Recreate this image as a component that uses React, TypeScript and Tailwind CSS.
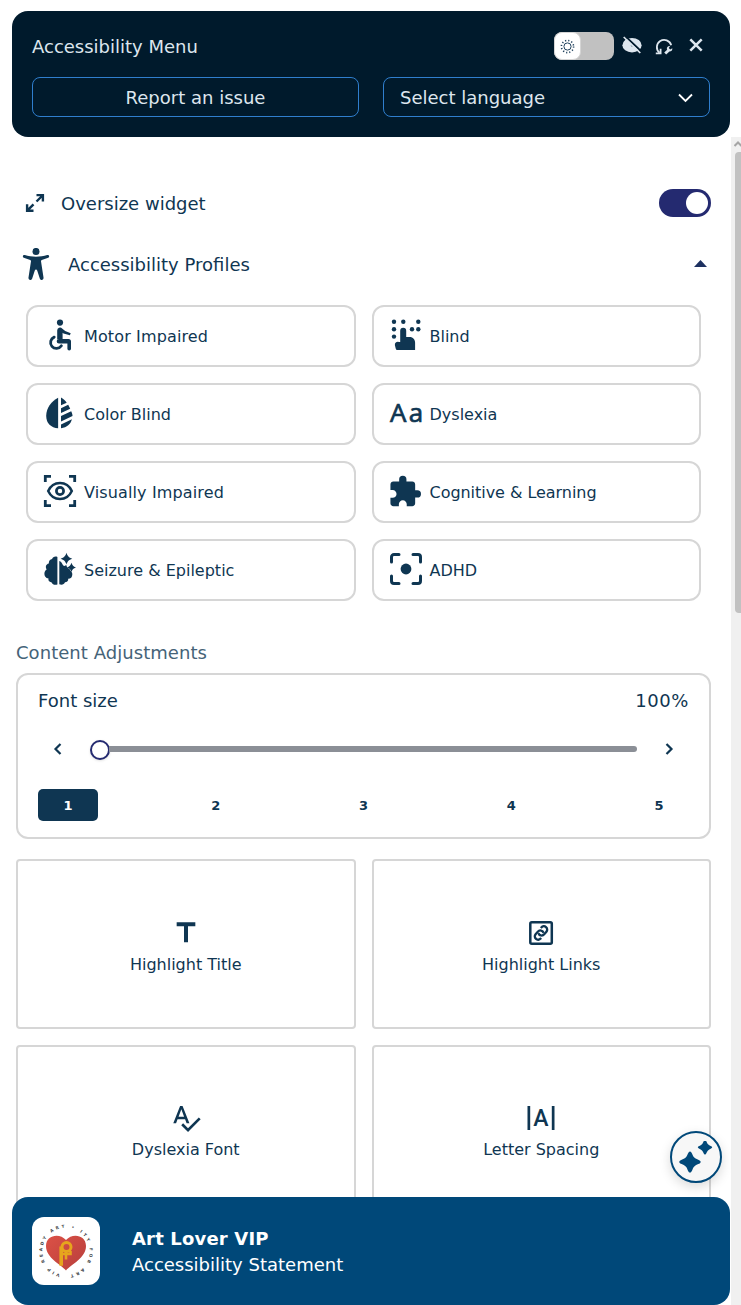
import React from "react";
import { MdTitle, MdSpellcheck, MdExtension } from "react-icons/md";

const ic = "h-8 w-8 shrink-0 mb-0.5 overflow-visible";

const EyeOff = () => (
  <svg className="h-5 w-5" viewBox="0 0 20 20">
    <ellipse cx="10" cy="9.2" rx="9.6" ry="7.3" fill="#dde6ee" />
    <circle cx="10.2" cy="9.6" r="1.4" fill="#8999a8" />
    <path d="M2.9 -.2L20 16" stroke="#001a2c" strokeWidth="1.800" />
    <path d="M1.700 1L18.300 17" stroke="#dde6ee" strokeWidth="1.700" />
  </svg>
);

const Reset = () => (
  <svg className="h-5 w-5" viewBox="0 0 20 20" fill="none" stroke="#dde6ee" strokeWidth="1.800">
    <path d="M5.500 16.800A7.300 7.300 0 1 1 17.200 9.200" />
    <path d="M1.800 17.400h4.800v-4.600" />
    <path d="M11.200 17.600l3.200-3.200" strokeWidth="2.800" />
    <path d="M12.900 13.400c-.3-2 1-3.600 3.200-3.300l-1.300 1.800 1.400 1.500 2.100-1.200c.3 2.500-1.700 3.800-3.800 3.200z" fill="#dde6ee" stroke="none" />
  </svg>
);

const Sun = () => (
  <svg className="h-[15px] w-[15px]" viewBox="0 0 15 15" fill="none" stroke="#21425d" strokeWidth="1">
    <circle cx="7.500" cy="7.500" r="3.600" />
    <circle cx="7.500" cy="7.500" r="6.100" strokeWidth="1.600" strokeDasharray="1.200 1.990" />
  </svg>
);

const Motor = () => (
  <svg className={ic} viewBox="0 0 32 32" fill="none" stroke="#0f3652" strokeWidth="2.800" strokeLinecap="round" strokeLinejoin="round">
    <circle cx="16" cy="3.600" r="3.100" fill="#0f3652" stroke="none" />
    <path d="M13.200 11.400a2.900 2.900 0 0 1 4.900-2l3.100 2.700 5.500 2.100-.8 2.100-6.400-1.900-.9-.6v6.500h-5.400z" fill="#0f3652" stroke="none" />
    <path d="M15 20h9.500a2.500 2.500 0 0 1 2.500 2.500v7.200a1.800 1.800 0 0 1-3.600 0v-5.100H15a2.300 2.300 0 0 1 0-4.600z" fill="#0f3652" stroke="none" />
    <path d="M10.200 18.100a5.900 5.900 0 1 0 7.200 8.700" />
  </svg>
);

const Blind = () => (
  <svg className={ic} viewBox="0 0 32 32" fill="#0f3652">
    <circle cx="4" cy="2.700" r="2.200" /><circle cx="13.300" cy="2.700" r="2.200" /><circle cx="28.300" cy="2.700" r="2.200" />
    <circle cx="4" cy="10.300" r="2.200" /><circle cx="22" cy="10.300" r="2.200" /><circle cx="28.300" cy="10.300" r="2.200" />
    <circle cx="4" cy="17.600" r="2.200" />
    <path d="M10.200 11.700a3 3 0 0 1 6 0v6.400h3.500c3.300 0 5.400 2.600 5.400 5.700V31H7.400a1.700 1.700 0 0 1-1.700-1.500l-.8-3.200c-.4-2.400 1.500-3.800 3.800-3.400l1.500.2z" />
  </svg>
);

const ColorBlind = () => (
  <svg className={ic} viewBox="0 0 32 32" fill="#0f3652">
    <path d="M14.100.8v30.500C7.100 30.800 2.200 26.200 2.200 19 2.200 11.400 7.300 4.100 14.100.8z" />
    <path d="M17 .6c2.800 1.600 4.400 3.300 5.700 5.100L17 8.300zM17 11.300l7.200-3.600 2 4L17 16zM17 19.100l10.200-4.800c1 2.200 1.400 3.700 1.300 4.800L17 24.500zM17 27.500l10.900-5.200c-1.300 5-4.800 8-10.900 9z" />
  </svg>
);

const Dyslexia = () => (
  <span className="mb-0.5 flex h-8 w-8 shrink-0 items-center justify-between font-['Open_Sans',sans-serif] text-[26px] leading-8 font-medium">
    <svg className="h-10 w-8 shrink-0 overflow-visible" viewBox="0 -4 32 40" fill="#0f3652" stroke="#0f3652" strokeWidth=".700">
      <text x="-.1" y="25" textLength="16.400" lengthAdjust="spacingAndGlyphs">A</text>
      <text x="18.800" y="25" textLength="14.400" lengthAdjust="spacingAndGlyphs">a</text>
    </svg>
  </span>
);

const Vision = () => (
  <svg className={ic} viewBox="0 0 32 32" fill="none" stroke="#0f3652" strokeWidth="2.800">
    <path d="M1.300 7V1.300H7M25 1.300h5.700V7M1.300 25v5.700H7M25 30.700h5.700V25" />
    <path d="M4.200 16C6.500 11 11 8 16 8s9.500 3 11.800 8C25.500 21 21 24 16 24S6.500 21 4.200 16z" strokeWidth="2.500" />
    <circle cx="16" cy="16" r="3.600" strokeWidth="2.700" />
  </svg>
);

const Brain = () => (
  <svg className={ic} viewBox="0 0 32 32" fill="#0f3652">
    <path d="M13.400 31.400c-1.900.9-5 .5-5.700-2C4.900 29.200 4 27.300 4.500 25.600 1.700 25.200.2 23.100.4 20.500.5 18.400 1.600 17.100 2.700 16.500 1.100 14 1.900 11.200 4.800 10.500 4.700 7.900 6.200 6.300 8.100 6.100 8.500 3.900 11.400 2.700 13.400 3.900z" />
    <path d="M15.300 8c1.700.4 2.500 1.700 3.200 3.300.7 2 2.800 2 3.700.8.6 2 1.200 3 2.800 3.600.8.3 1 1.400 2 2.600.8 1.100 1.300 1.300 1.300 3.100 0 2.700-1.600 4.300-4.100 4.400.3 2-1.200 3.500-3.200 3.500-.8 2.400-3.400 2.900-5.700 2z" />
    <path d="M22.500-.2c1.100 3.400 2.200 4.700 5.800 5.900-3.600 1.200-4.700 2.400-5.800 5.800-1.200-3.400-2.300-4.600-5.900-5.800 3.600-1.200 4.700-2.500 5.900-5.900zM27.500 9.800c.9 2.800 1.800 3.800 4.500 4.700-2.700.9-3.600 1.900-4.500 4.600-1-2.700-1.900-3.700-4.600-4.600 2.700-.9 3.600-1.900 4.600-4.700z" />
  </svg>
);

const Puzzle = () => <MdExtension className={ic} viewBox="1.7 .5 22 22" color="#0f3652" />;

const Focus = () => (
  <svg className={ic} viewBox="0 0 32 32" fill="none" stroke="#0f3652" strokeWidth="3" strokeLinecap="round">
    <path d="M1.500 9V4a2.500 2.500 0 0 1 2.500-2.500H9M23 1.500h5A2.500 2.500 0 0 1 30.500 4v5M1.500 23v5A2.500 2.500 0 0 0 4 30.500h5M23 30.500h5a2.500 2.500 0 0 0 2.500-2.500v-5" />
    <circle cx="16" cy="16" r="5.400" fill="#0f3652" stroke="none" />
  </svg>
);

const LinkBox = () => (
  <svg className="h-8 w-8" viewBox="0 0 32 32" fill="none" stroke="#0f3652" strokeWidth="2.500">
    <rect x="5.300" y="5.300" width="21.500" height="21.500" rx="1.500" />
    <g transform="rotate(-50 16 16)" strokeWidth="2.300">
      <path d="M12.300 19.300h-.8a3.300 3.300 0 0 1 0-6.600h3.500a3.300 3.300 0 0 1 2.700 5.200" />
      <path d="M19.700 12.700h.8a3.300 3.300 0 0 1 0 6.600H17a3.300 3.300 0 0 1-2.700-5.200" />
    </g>
  </svg>
);

const Spacing = () => (
  <svg className="h-8 w-8" viewBox="0 0 32 32" fill="#0f3652">
    <rect x="2.500" y="4" width="2.700" height="24" />
    <rect x="26.800" y="4" width="2.700" height="24" />
    <text x="16" y="24" textAnchor="middle" fontFamily="Roboto" fontWeight="500" fontSize="23">A</text>
  </svg>
);

const Sparkles = () => (
  <svg className="h-8 w-[34px] shrink-0" viewBox="0 0 34 32" fill="#004879">
    <path d="M11 10.500c2 0 2.200 4 4.300 6.100S21.700 19.200 21.700 21s-4.300 2.300-6.400 4.400-2.300 6.200-4.300 6.200-2.200-4.100-4.300-6.200S.3 22.900.3 21s4.300-2.300 6.400-4.400 2.300-6.100 4.300-6.100z" />
    <path d="M26-1c1.400 0 1.500 2.700 3 4.200s4.200 1.800 4.200 3.100S30.500 7.900 29 9.400s-1.600 4.100-3 4.100-1.500-2.600-3-4.100-4.200-1.800-4.200-3.100 2.700-1.600 4.200-3.100S24.600-1 26-1z" />
  </svg>
);

const Logo = () => (
  <svg className="h-[68px] w-[68px]" viewBox="0 0 68 68">
    <defs>
      <linearGradient id="heart" x1="0" x2="1" y1="0" y2="1">
        <stop offset="0" stopColor="#dc5146" />
        <stop offset="1" stopColor="#b73f3c" />
      </linearGradient>
      <path id="ring" d="M34 58a23.700 23.700 0 1 1 .1 0" />
    </defs>
    <text fontFamily="DejaVu Sans" fontWeight="700" fontSize="4.200" fill="#3c4246">
      <textPath href="#ring" startOffset="6" textLength="138">VIP  READY ART • ITY FOR  ART</textPath>
    </text>
    <path d="M34 53.500C29 47.500 14 41 14 29 14 18 27.500 15.500 34 23c6.500-7.500 20-5 20 6 0 12-15 18.500-20 24.500z" fill="url(#heart)" />
    <g fill="none" stroke="#e6a51d">
      <circle cx="34.500" cy="30" r="4.500" strokeWidth="3" />
      <path d="M29.200 29.500v19.300" strokeWidth="3.600" />
      <path d="M34 34v8.500M31 37h7.500v-3" strokeWidth="2.600" />
    </g>
  </svg>
);

function Profile({ icon, label, track }: { icon: React.ReactNode; label: string; track: string }) {
  return (
    <div className="flex h-[62px] items-center gap-2 rounded-xl border-2 border-[#d6d6d6] pl-4">
      {icon}
      <span className={`pt-0.5 text-base leading-5 whitespace-nowrap ${track}`}>{label}</span>
    </div>
  );
}

function Tile({ icon, label }: { icon: React.ReactNode; label: string }) {
  return (
    <div className="flex h-[170px] flex-col items-center rounded-[4px] border-2 border-[#d6d6d6] pt-14">
      {icon}
      <span className="mt-[6px] text-base leading-5">{label}</span>
    </div>
  );
}

export default function App() {
  return (
    <div className="relative flex h-[1305px] w-full flex-col overflow-hidden bg-white font-['DejaVu_Sans',sans-serif] text-[#0f3652]">
      <header className="mx-3 mt-[11px] h-[126px] w-[718px] shrink-0 rounded-2xl bg-[#001a2c] px-5 pt-[21px] text-[#dde6ee]">
        <div className="flex h-7 items-center">
          <h1 className="flex-1 pt-0.5 text-lg leading-7">Accessibility Menu</h1>
          <div className="flex h-7 w-[60px] items-center rounded-lg bg-[#c1c1c1]">
            <span className="flex h-7 w-[27px] items-center justify-center rounded-lg border border-[#d5d5d5] bg-white"><Sun /></span>
          </div>
          <div className="ml-2 flex items-center gap-3">
            <EyeOff />
            <Reset />
            <svg className="h-5 w-5" viewBox="0 0 20 20" stroke="#dde6ee" strokeWidth="2.500"><path d="M4.300 3.300l11.400 11.400M15.700 3.300L4.300 14.700" /></svg>
          </div>
          <span className="w-1" />
        </div>
        <div className="mt-[17px] grid grid-cols-2 gap-6 text-lg">
          <button className="h-10 rounded-lg border border-[#2f7ecd] pt-0.5">Report an issue</button>
          <button className="flex h-10 items-center justify-between rounded-lg border border-[#2f7ecd] px-4 pt-0.5">
            Select language
            <svg className="h-4 w-4" viewBox="0 0 16 16" fill="none" stroke="#fff" strokeWidth="1.800"><path d="M2 4.500L8.500 11 15 4.500" /></svg>
          </button>
        </div>
      </header>

      <div className="flex min-h-0 flex-1">
        <main className="w-[731px] shrink-0 pt-[52px]">
          <div className="flex h-7 items-center pr-5 pl-[25px]">
            <svg className="h-5 w-5" viewBox="0 0 20 20" fill="none" stroke="#0f3652" strokeWidth="2.400">
              <path d="M11.500 2.100h6.400v6.500M17.500 2.500l-6 6M8.500 17.700H2.100v-6.500M2.500 17.300l6-6" />
            </svg>
            <span className="ml-4 flex-1 pt-0.5 text-lg leading-7">Oversize widget</span>
            <span className="flex h-7 w-[52px] items-center justify-end rounded-full bg-[#242a70] pr-[3px]">
              <span className="h-[22px] w-[22px] rounded-full bg-white" />
            </span>
          </div>
          <div className="mt-[31px] flex h-8 items-center pr-6 pl-5">
            <svg className="h-8 w-8" viewBox="0 0 32 32" fill="#0f3652">
              <circle cx="16" cy="3.400" r="3.500" />
              <path d="M4.800 7.100C8.200 8.400 12 8.800 16 8.800s7.800-.4 11.200-1.700c2-.7 2.700 2 1 2.700L21.800 12c-.6.200-.9.700-.8 1.300l2.500 16.300c.4 2.600-3 3.300-3.700.9L17.200 22.500c-.4-1.200-2-1.200-2.400 0l-2.600 8c-.7 2.400-4.100 1.700-3.700-.9L11 13.300c.1-.6-.2-1.100-.8-1.300L3.800 9.800c-1.700-.7-1-3.400 1-2.700z" />
            </svg>
            <span className="ml-4 flex-1 pt-0.5 text-lg">Accessibility Profiles</span>
            <svg className="mb-0.5 h-[7px] w-[13px]" viewBox="0 0 13 7"><path d="M0 7L6.500 0 13 7z" fill="#1d3060" /></svg>
          </div>

          <section className="mt-[25px] grid grid-cols-2 gap-4 pr-[30px] pl-[26px]">
            <Profile icon={<Motor />} label="Motor Impaired" track="tracking-[0.13px]" />
            <Profile icon={<Blind />} label="Blind" track="tracking-normal" />
            <Profile icon={<ColorBlind />} label="Color Blind" track="tracking-normal" />
            <Profile icon={<Dyslexia />} label="Dyslexia" track="tracking-normal" />
            <Profile icon={<Vision />} label="Visually Impaired" track="tracking-[0.13px]" />
            <Profile icon={<Puzzle />} label="Cognitive & Learning" track="tracking-[-0.04px]" />
            <Profile icon={<Brain />} label="Seizure & Epileptic" track="tracking-normal" />
            <Profile icon={<Focus />} label="ADHD" track="tracking-normal" />
          </section>

          <section className="mt-[38px] pr-5 pl-4">
            <h2 className="text-lg leading-7 tracking-[0.05px] text-[#456378]">Content Adjustments</h2>
            <div className="mt-[6px] h-[166px] rounded-xl border-2 border-[#d6d6d6] px-5 pt-3">
              <div className="flex justify-between text-lg leading-7"><span>Font size</span><span className="tracking-[0.6px]">100%</span></div>
              <div className="mt-6 flex h-5 items-center px-[15px]">
                <svg className="h-3 w-[10px]" viewBox="0 0 10 12" fill="none" stroke="#0f3652" strokeWidth="2.200"><path d="M7.500 1L2.500 6l5 5" /></svg>
                <div className="ml-[27px] flex h-5 flex-1 items-center">
                  <span className="mt-[1px] h-5 w-5 rounded-full border-2 border-[#242a70] bg-white shadow-sm" />
                  <span className="-ml-px h-[6px] flex-1 rounded-r-full bg-[#8b8f96]" />
                </div>
                <svg className="ml-[27px] h-3 w-[10px]" viewBox="0 0 10 12" fill="none" stroke="#0f3652" strokeWidth="2.200"><path d="M2.500 1l5 5-5 5" /></svg>
              </div>
              <div className="mt-[30px] flex justify-between text-[13px] font-bold">
                <span className="flex h-8 w-[60px] items-center justify-center rounded-[5px] bg-[#0f3652] pt-px text-white">1</span>
                <span className="flex h-8 w-[60px] items-center justify-center pt-px">2</span>
                <span className="flex h-8 w-[60px] items-center justify-center pt-px">3</span>
                <span className="flex h-8 w-[60px] items-center justify-center pt-px">4</span>
                <span className="flex h-8 w-[60px] items-center justify-center pt-px">5</span>
              </div>
            </div>
            <div className="mt-5 grid grid-cols-2 gap-4">
              <Tile icon={<MdTitle className="h-8 w-8" />} label="Highlight Title" />
              <Tile icon={<LinkBox />} label="Highlight Links" />
              <Tile icon={<MdSpellcheck className="-mt-px h-8 w-8" />} label="Dyslexia Font" />
              <Tile icon={<div className="-mt-px"><Spacing /></div>} label="Letter Spacing" />
            </div>
          </section>
        </main>
        <div className="flex flex-1 flex-col items-end bg-[#f0f0f0]">
          <svg className="mt-1 h-[7px] w-[7px]" viewBox="0 0 7 7" fill="none" stroke="#a5a5a5" strokeWidth="2"><path d="M.5 5L4 1.500 7.500 5" /></svg>
          <div className="mt-1 h-[461px] w-[6px] rounded-l bg-[#c1c1c1]" />
        </div>
      </div>

      <button className="absolute top-[1131px] left-[670px] flex h-[52px] w-[52px] items-center justify-center rounded-full border-2 border-[#004879] bg-[#f7f7f7] shadow-[0_4px_12px_rgba(0,0,0,0.15)]"><Sparkles /></button>

      <footer className="absolute bottom-0 left-3 flex h-[108px] w-[718px] items-center rounded-2xl bg-[#004879] pl-5 text-lg text-white">
        <span className="h-[68px] w-[68px] overflow-hidden rounded-xl bg-white"><Logo /></span>
        <div className="ml-8 pt-0.5 leading-[26px]">
          <p className="font-bold tracking-[0.17px]">Art Lover VIP</p>
          <p>Accessibility Statement</p>
        </div>
      </footer>
    </div>
  );
}
